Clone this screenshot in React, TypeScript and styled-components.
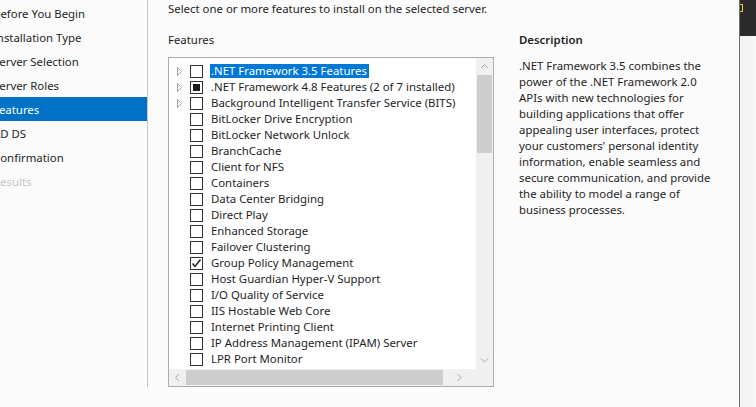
import React from 'react';
import styled, { createGlobalStyle } from 'styled-components';

const GlobalStyle = createGlobalStyle`
  html, body {
    margin: 0;
    padding: 0;
    background: #fbfbfb;
    overflow: hidden;
  }
  body {
    font-family: 'Noto Sans', 'Open Sans', Arial, sans-serif;
    font-size: 11.4px;
    color: #1e1e1e;
  }
`;

const navItems = [
  { label: 'Before You Begin' },
  { label: 'Installation Type' },
  { label: 'Server Selection' },
  { label: 'Server Roles' },
  { label: 'Features', active: true },
  { label: 'AD DS' },
  { label: 'Confirmation' },
  { label: 'Results', disabled: true },
];

type Feature = { label: string; expandable?: boolean; state?: 'none' | 'partial' | 'checked'; selected?: boolean };

const features: Feature[] = [
  { label: '.NET Framework 3.5 Features', expandable: true, selected: true },
  { label: '.NET Framework 4.8 Features (2 of 7 installed)', expandable: true, state: 'partial' },
  { label: 'Background Intelligent Transfer Service (BITS)', expandable: true },
  { label: 'BitLocker Drive Encryption' },
  { label: 'BitLocker Network Unlock' },
  { label: 'BranchCache' },
  { label: 'Client for NFS' },
  { label: 'Containers' },
  { label: 'Data Center Bridging' },
  { label: 'Direct Play' },
  { label: 'Enhanced Storage' },
  { label: 'Failover Clustering' },
  { label: 'Group Policy Management', state: 'checked' },
  { label: 'Host Guardian Hyper-V Support' },
  { label: 'I/O Quality of Service' },
  { label: 'IIS Hostable Web Core' },
  { label: 'Internet Printing Client' },
  { label: 'IP Address Management (IPAM) Server' },
  { label: 'LPR Port Monitor' },
];

const description = [
  '.NET Framework 3.5 combines the',
  'power of the .NET Framework 2.0',
  'APIs with new technologies for',
  'building applications that offer',
  'appealing user interfaces, protect',
  "your customers' personal identity",
  'information, enable seamless and',
  'secure communication, and provide',
  'the ability to model a range of',
  'business processes.',
];

function Chevron({ dir }: { dir: 'up' | 'down' | 'left' | 'right' }) {
  const paths = {
    up: 'M1 5 L4.5 1.5 L8 5',
    down: 'M1 1.5 L4.5 5 L8 1.5',
    left: 'M5 1 L1.5 4.5 L5 8',
    right: 'M1.5 1 L5 4.5 L1.5 8',
  };
  const vertical = dir === 'up' || dir === 'down';
  return (
    <svg width={vertical ? 9 : 7} height={vertical ? 7 : 9} viewBox={vertical ? '0 0 9 7' : '0 0 7 9'}>
      <path d={paths[dir]} fill="none" stroke="#a6a6a6" strokeWidth="1" />
    </svg>
  );
}

export default function App() {
  return (
    <>
      <GlobalStyle />
      <Page>
        <Nav>
          {navItems.map((item) => (
            <NavItem key={item.label} $active={item.active} $disabled={item.disabled}>
              {item.label}
            </NavItem>
          ))}
        </Nav>
        <Content>
          <Intro>Select one or more features to install on the selected server.</Intro>
          <Columns>
            <FeaturesCol>
              <Heading>Features</Heading>
              <ListBox>
                <Viewport>
                  {features.map((f) => (
                    <Row key={f.label}>
                      <Expander>
                        {f.expandable && (
                          <svg width="6" height="9" viewBox="0 0 6 9">
                            <path d="M0.5 0.5 L4.5 4.5 L0.5 8.5 Z" fill="none" stroke="#a0a0a0" strokeWidth="1" />
                          </svg>
                        )}
                      </Expander>
                      <CheckBox>
                        {f.state === 'partial' && <PartialMark />}
                        {f.state === 'checked' && (
                          <svg width="11" height="11" viewBox="0 0 11 11">
                            <path d="M1.5 5.5 L4 8.5 L9.5 1.5" fill="none" stroke="#1a1a1a" strokeWidth="1.4" />
                          </svg>
                        )}
                      </CheckBox>
                      <Label $selected={f.selected}>{f.label}</Label>
                    </Row>
                  ))}
                </Viewport>
                <VScroll>
                  <ArrowCell>
                    <Chevron dir="up" />
                  </ArrowCell>
                  <VTrack>
                    <VThumb />
                  </VTrack>
                  <ArrowCell>
                    <Chevron dir="down" />
                  </ArrowCell>
                </VScroll>
                <HScroll>
                  <ArrowCell>
                    <Chevron dir="left" />
                  </ArrowCell>
                  <HThumb />
                  <HArrowCell>
                    <Chevron dir="right" />
                  </HArrowCell>
                </HScroll>
                <Corner />
              </ListBox>
            </FeaturesCol>
            <DescCol>
              <Heading $bold>Description</Heading>
              <DescText>
                {description.map((line) => (
                  <DescLine key={line}>{line}</DescLine>
                ))}
              </DescText>
            </DescCol>
          </Columns>
        </Content>
        <PeekWindow>
          <PeekTitle>
            <PeekIcon />
          </PeekTitle>
          <PeekBody />
        </PeekWindow>
      </Page>
    </>
  );
}

const Page = styled.div`
  display: flex;
  width: 756px;
  height: 407px;
  overflow: hidden;
`;

const Nav = styled.div`
  width: 147px;
  height: 386px;
  padding-top: 1px;
  border-right: 1px solid #c6c6c6;
  flex-shrink: 0;
  overflow: hidden;
`;

const NavItem = styled.div<{ $active?: boolean; $disabled?: boolean }>`
  height: 24px;
  line-height: 26px;
  margin-left: -7px;
  white-space: nowrap;
  background: ${(p) => (p.$active ? '#0072c6' : 'transparent')};
  color: ${(p) => (p.$active ? '#ffffff' : p.$disabled ? '#c4c4c4' : '#1e1e1e')};
`;

const Content = styled.div`
  flex: 1;
  padding-left: 20px;
`;

const Intro = styled.div`
  height: 16px;
  line-height: 17px;
  white-space: nowrap;
`;

const Columns = styled.div`
  display: flex;
  gap: 25px;
  margin-top: 16px;
`;

const FeaturesCol = styled.div`
  width: 326px;
  flex-shrink: 0;
`;

const DescCol = styled.div`
  flex: 1;
`;

const Heading = styled.div<{ $bold?: boolean }>`
  height: 16px;
  line-height: 16px;
  font-weight: ${(p) => (p.$bold ? 600 : 400)};
  margin-bottom: 9px;
`;

const ListBox = styled.div`
  display: grid;
  grid-template-columns: 307px 17px;
  grid-template-rows: 311px 17px;
  border: 1px solid #acacac;
  background: #ffffff;
`;

const Viewport = styled.div`
  padding-top: 5px;
  overflow: hidden;
`;

const Row = styled.div`
  display: flex;
  align-items: center;
  height: 16px;
  white-space: nowrap;
`;

const Expander = styled.div`
  width: 21px;
  padding-left: 8px;
  box-sizing: border-box;
  display: flex;
  align-items: center;
`;

const CheckBox = styled.div`
  width: 11px;
  height: 11px;
  border: 1px solid #333333;
  background: #ffffff;
  display: flex;
  align-items: center;
  justify-content: center;
  margin-right: 8px;
`;

const PartialMark = styled.div`
  width: 7px;
  height: 7px;
  background: #1a1a1a;
`;

const Label = styled.span<{ $selected?: boolean }>`
  line-height: 14px;
  padding: 0 2px 0 1px;
  margin-left: -1px;
  background: ${(p) => (p.$selected ? '#0078d7' : 'transparent')};
  color: ${(p) => (p.$selected ? '#ffffff' : '#1e1e1e')};
`;

const VScroll = styled.div`
  display: flex;
  flex-direction: column;
  background: #f0f0f0;
`;

const ArrowCell = styled.div`
  width: 17px;
  height: 17px;
  display: flex;
  align-items: center;
  justify-content: center;
  flex-shrink: 0;
`;

const HArrowCell = styled(ArrowCell)`
  width: 33px;
`;

const VTrack = styled.div`
  flex: 1;
`;

const VThumb = styled.div`
  height: 78px;
  background: #cdcdcd;
  margin: 0 1px;
`;

const HScroll = styled.div`
  display: flex;
  background: #f0f0f0;
`;

const HThumb = styled.div`
  width: 257px;
  height: 15px;
  margin-top: 1px;
  background: #cdcdcd;
`;

const Corner = styled.div`
  background: #f0f0f0;
`;

const DescText = styled.div`
  margin-top: 2px;
`;

const DescLine = styled.div`
  height: 16px;
  line-height: 17px;
  white-space: nowrap;
`;

const PeekWindow = styled.div`
  width: 16px;
  flex-shrink: 0;
  border-left: 1px solid #6e6e6e;
  display: flex;
  flex-direction: column;
`;

const PeekTitle = styled.div`
  height: 36px;
  background: #2b2b2b;
  position: relative;
`;

const PeekIcon = styled.div`
  position: absolute;
  left: 0;
  top: 4px;
  width: 2px;
  height: 6px;
  border: 1px solid #e8c24a;
  border-left: none;
`;

const PeekBody = styled.div`
  flex: 1;
  background: #f3f3f3;
  border-right: 3px solid #f8f8f8;
`;
